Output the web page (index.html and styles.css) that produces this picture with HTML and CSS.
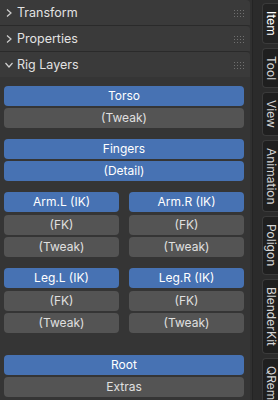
FILE: index.html
```html
<!DOCTYPE html>
<html lang="en">
<head>
    <meta charset="UTF-8">
    <title>Sidebar - Rig Layers</title>
    <link rel="stylesheet" href="styles.css">
</head>
<body>

    <!-- Panels -->
    <div class="sidebar">
        <div class="panel">
            <div class="panel-header">
                <svg class="chevron" width="10" height="10" viewBox="0 0 10 10"><path d="M3 1.5 L7 5 L3 8.5" /></svg>
                <span class="panel-title">Transform</span>
                <svg class="grip" width="14" height="8" viewBox="0 0 14 8"><g><rect x="1" y="1" width="1" height="1"/><rect x="4" y="1" width="1" height="1"/><rect x="7" y="1" width="1" height="1"/><rect x="10" y="1" width="1" height="1"/><rect x="1" y="4" width="1" height="1"/><rect x="4" y="4" width="1" height="1"/><rect x="7" y="4" width="1" height="1"/><rect x="10" y="4" width="1" height="1"/><rect x="1" y="7" width="1" height="1"/><rect x="4" y="7" width="1" height="1"/><rect x="7" y="7" width="1" height="1"/><rect x="10" y="7" width="1" height="1"/></g></svg>
            </div>
        </div>

        <div class="panel">
            <div class="panel-header">
                <svg class="chevron" width="10" height="10" viewBox="0 0 10 10"><path d="M3 1.5 L7 5 L3 8.5" /></svg>
                <span class="panel-title">Properties</span>
                <svg class="grip" width="14" height="8" viewBox="0 0 14 8"><g><rect x="1" y="1" width="1" height="1"/><rect x="4" y="1" width="1" height="1"/><rect x="7" y="1" width="1" height="1"/><rect x="10" y="1" width="1" height="1"/><rect x="1" y="4" width="1" height="1"/><rect x="4" y="4" width="1" height="1"/><rect x="7" y="4" width="1" height="1"/><rect x="10" y="4" width="1" height="1"/><rect x="1" y="7" width="1" height="1"/><rect x="4" y="7" width="1" height="1"/><rect x="7" y="7" width="1" height="1"/><rect x="10" y="7" width="1" height="1"/></g></svg>
            </div>
        </div>

        <div class="panel panel-open">
            <div class="panel-header">
                <svg class="chevron" width="10" height="10" viewBox="0 0 10 10"><path d="M1.5 3 L5 7 L8.5 3" /></svg>
                <span class="panel-title">Rig Layers</span>
                <svg class="grip" width="14" height="8" viewBox="0 0 14 8"><g><rect x="1" y="1" width="1" height="1"/><rect x="4" y="1" width="1" height="1"/><rect x="7" y="1" width="1" height="1"/><rect x="10" y="1" width="1" height="1"/><rect x="1" y="4" width="1" height="1"/><rect x="4" y="4" width="1" height="1"/><rect x="7" y="4" width="1" height="1"/><rect x="10" y="4" width="1" height="1"/><rect x="1" y="7" width="1" height="1"/><rect x="4" y="7" width="1" height="1"/><rect x="7" y="7" width="1" height="1"/><rect x="10" y="7" width="1" height="1"/></g></svg>
            </div>

            <div class="panel-body">
                <div class="group">
                    <div class="btn on">Torso</div>
                    <div class="btn">(Tweak)</div>
                </div>

                <div class="group">
                    <div class="btn on">Fingers</div>
                    <div class="btn on">(Detail)</div>
                </div>

                <div class="group split">
                    <div class="col">
                        <div class="btn on">Arm.L (IK)</div>
                        <div class="btn">(FK)</div>
                        <div class="btn">(Tweak)</div>
                    </div>
                    <div class="col">
                        <div class="btn on">Arm.R (IK)</div>
                        <div class="btn">(FK)</div>
                        <div class="btn">(Tweak)</div>
                    </div>
                </div>

                <div class="group split">
                    <div class="col">
                        <div class="btn on">Leg.L (IK)</div>
                        <div class="btn">(FK)</div>
                        <div class="btn">(Tweak)</div>
                    </div>
                    <div class="col">
                        <div class="btn on">Leg.R (IK)</div>
                        <div class="btn">(FK)</div>
                        <div class="btn">(Tweak)</div>
                    </div>
                </div>

                <div class="group last">
                    <div class="btn on">Root</div>
                    <div class="btn">Extras</div>
                </div>
            </div>
        </div>
    </div>

    <!-- Tabs -->
    <div class="tabs">
        <div class="tab active">Item</div>
        <div class="tab">Tool</div>
        <div class="tab">View</div>
        <div class="tab">Animation</div>
        <div class="tab">Poligon</div>
        <div class="tab">BlenderKit</div>
        <div class="tab">QRemesher</div>
    </div>

</body>
</html>
```

FILE: styles.css
```css
/* General Body Style */
body {
    margin: 0;
    width: 278px;
    height: 400px;
    overflow: hidden;
    display: flex;
    background-color: #2b2b2b;
    font-family: Inter, 'Noto Sans', sans-serif;
    font-size: 12px;
    color: #e6e6e6;
}

/* Panel column */
.sidebar {
    width: 253px;
    height: 400px;
    flex-shrink: 0;
    background-color: #303030;
    border-right: 1px solid #242424;
    padding-right: 2px;
    box-sizing: border-box;
    overflow: hidden;
}

.panel {
    background-color: #353535;
    border-radius: 0 4px 4px 0;
    border-bottom: 1px solid #2a2a2a;
}

.panel-open {
    border-bottom: none;
    height: 400px;
}

/* Panel header */
.panel-header {
    height: 25px;
    display: flex;
    align-items: center;
    padding: 0 3px 0 4px;
    background-color: #3a3a3a;
    border-radius: 0 4px 0 0;
}

.chevron {
    fill: none;
    stroke: #cfcfcf;
    stroke-width: 1.2;
    margin-right: 3px;
}

.panel-title {
    flex: 1;
    font-size: 12.5px;
    color: #e2e2e2;
}

.grip {
    fill: #707070;
}

/* Rig layer buttons */
.panel-body {
    display: flex;
    flex-direction: column;
    padding: 9px 6px 0 4px;
}

.group {
    display: flex;
    flex-direction: column;
    gap: 2px;
    margin-bottom: 11px;
}

.group.split {
    flex-direction: row;
    gap: 10px;
}

.group.last {
    margin-top: 11px;
}

.col {
    flex: 1;
    display: flex;
    flex-direction: column;
    gap: 2.5px;
}

.btn {
    height: 20px;
    line-height: 20px;
    text-align: center;
    background-color: #545454;
    border-radius: 4px;
    color: #e0e0e0;
    font-size: 12px;
}

.btn.on {
    background-color: #4772b3;
    color: #ffffff;
}

/* Vertical tabs */
.tabs {
    flex: 1;
    height: 400px;
    overflow: hidden;
    display: flex;
    flex-direction: column;
    gap: 4px;
    padding: 3px 0 0 9px;
}

.tab {
    flex-shrink: 0;
    writing-mode: vertical-rl;
    background-color: #1f1f1f;
    border: 1px solid #3a3a3a;
    border-right: none;
    border-radius: 4px 0 0 4px;
    padding: 7px 0;
    width: 16px;
    line-height: 16px;
    font-size: 12px;
    color: #d4d4d4;
    white-space: nowrap;
}

.tab.active {
    background-color: #232323;
    color: #ffffff;
}
```
